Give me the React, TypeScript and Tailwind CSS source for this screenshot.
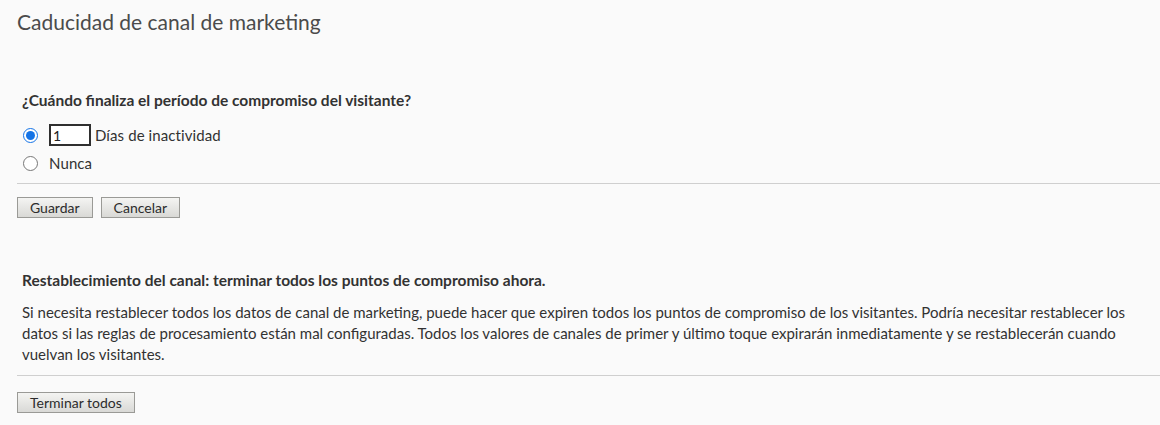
import { useState } from "react";

const font = "font-['Lato','Open_Sans',sans-serif]";

const btn =
  "h-[21px] border border-[#9a9a96] bg-gradient-to-b from-[#f4f4f2] to-[#d9d9d6] px-[12px] text-[14px] leading-[19px] text-[#2c2c2c]";

export default function App() {
  const [mode, setMode] = useState<"days" | "never">("days");
  const [days, setDays] = useState("1");

  return (
    <div className={`min-h-[425px] w-[1160px] bg-[#fafafa] text-[#323232] ${font}`}>
      <h1 className="pl-[17px] pt-[8px] text-[21px] leading-[28px] text-[#4b4b4b]">
        Caducidad de canal de marketing
      </h1>

      <section className="mt-[54px] pl-[22px]">
        <h2 className="text-[15.5px] font-bold leading-[20px]">
          ¿Cuándo finaliza el período de compromiso del visitante?
        </h2>
        <div className="mt-[14px] flex flex-col gap-[6px] text-[15px] tracking-[0.1px]">
          <label className="flex h-[22px] items-center">
            <input
              type="radio"
              name="expiry"
              checked={mode === "days"}
              onChange={() => setMode("days")}
              className="m-0 ml-[1px] h-[15px] w-[15px] accent-[#1473e6]"
            />
            <input
              type="text"
              value={days}
              onChange={(e) => setDays(e.target.value)}
              className="ml-[11px] h-[22px] w-[42px] border-2 border-[#2f2f2f] bg-white px-[2px] text-[14px] leading-[18px] text-[#222] outline-none"
            />
            <span className="ml-[4px]">Días de inactividad</span>
          </label>
          <label className="flex h-[22px] items-center">
            <input
              type="radio"
              name="expiry"
              checked={mode === "never"}
              onChange={() => setMode("never")}
              className="m-0 ml-[1px] h-[15px] w-[15px] accent-[#1473e6]"
            />
            <span className="ml-[11px]">Nunca</span>
          </label>
        </div>
      </section>

      <hr className="ml-[17px] mt-[9px] border-t border-[#cfcfcf]" />

      <div className="mt-[13px] flex gap-[8px] pl-[17px]">
        <button className={btn}>Guardar</button>
        <button className={btn}>Cancelar</button>
      </div>

      <section className="mt-[52px] pl-[22px] pr-[14px]">
        <h2 className="text-[15.5px] font-bold leading-[20px]">
          Restablecimiento del canal: terminar todos los puntos de compromiso ahora.
        </h2>
        <p className="mt-[12px] text-[15px] leading-[21px]">
          Si necesita restablecer todos los datos de canal de marketing, puede hacer que expiren todos los
          puntos de compromiso de los visitantes. Podría necesitar restablecer los datos si las reglas de
          procesamiento están mal configuradas. Todos los valores de canales de primer y último toque
          expirarán inmediatamente y se restablecerán cuando vuelvan los visitantes.
        </p>
      </section>

      <hr className="ml-[17px] mt-[10px] border-t border-[#cfcfcf]" />

      <div className="mt-[14px] pl-[17px]">
        <button className={btn}>Terminar todos</button>
      </div>
    </div>
  );
}
